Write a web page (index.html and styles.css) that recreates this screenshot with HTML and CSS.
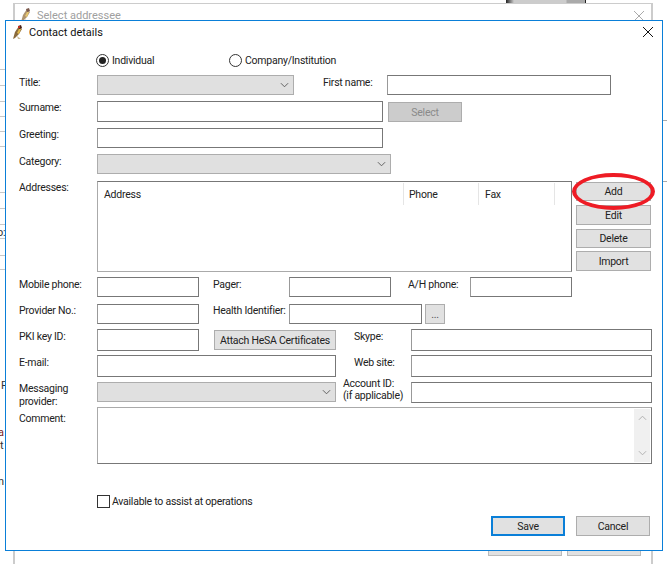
FILE: index.html
```html
<!DOCTYPE html>
<html lang="en">
<head>
    <meta charset="UTF-8">
    <meta name="viewport" content="width=device-width, initial-scale=1.0">
    <title>Contact details</title>
    <link rel="stylesheet" href="styles.css">
</head>
<body>
    <!-- bits of the application showing round the windows -->
    <svg class="behind-left" viewBox="0 0 5 564">
        <path d="M0 69.5H5 M0 85.5H5 M0 101.5H5 M0 116.5H5 M0 131.5H5 M0 146.5H5 M0 192.5H5 M0 208.5H5 M0 224.5H5 M0 238.5H5 M0 255.5H5 M0 269.5H5" stroke="#c8c8c8" fill="none"/>
        <text x="-3" y="236">o:</text>
        <text x="1" y="389">F</text>
        <text x="-2" y="436" fill="#7a1f1f">a</text>
        <text x="0" y="449">t</text>
        <text x="-2" y="485">n</text>
    </svg>
    <svg class="behind-right" viewBox="0 0 4 564">
        <path d="M0 120.5H4 M0 181.5H4" stroke="#aaa" fill="none"/>
    </svg>
    <div class="top-tab"></div>

    <!-- window underneath -->
    <div class="back-window">
        <div class="back-title">
            <svg class="bird faded" viewBox="0 0 11 15">
                <path d="M7 1 L10 4 L7 9 L3 13 L1 14 L3 7 Z" fill="#9c7a4a"/>
                <path d="M6 1 L9 0 L10 3 L7 4 Z" fill="#5a3020"/>
                <path d="M7 4 L9 4 L7 9 L5 8 Z" fill="#e0b84a"/>
                <path d="M5 11 L9 14 L6 14 Z" fill="#cdbb98"/>
            </svg>
            <span>Select addressee</span>
            <svg class="close" viewBox="0 0 10 10"><path d="M0 0 L10 10 M10 0 L0 10" stroke="#aaa" fill="none"/></svg>
        </div>
        <div class="back-buttons">
            <div class="back-btn"></div>
            <div class="back-btn"></div>
        </div>
    </div>

    <div class="dialog">
        <div class="title-bar">
            <svg class="bird" viewBox="0 0 11 15">
                <path d="M7 1 L10 4 L7 9 L3 13 L1 14 L3 7 Z" fill="#8a6a3c"/>
                <path d="M6 1 L9 0 L10 3 L7 4 Z" fill="#4a2015"/>
                <path d="M6 1 L8 1 L8 3 L6 3 Z" fill="#c03020"/>
                <path d="M7 4 L9 4 L7 9 L5 8 Z" fill="#e0b84a"/>
                <path d="M5 11 L9 14 L6 14 Z" fill="#cdbb98"/>
            </svg>
            <span>Contact details</span>
            <svg class="close" viewBox="0 0 10 10"><path d="M0 0 L10 10 M10 0 L0 10" stroke="#111" fill="none"/></svg>
        </div>

        <div class="form">
            <div class="radio-row">
                <label class="radio-item individual"><span class="radio checked"></span>Individual</label>
                <label class="radio-item"><span class="radio"></span>Company/Institution</label>
            </div>

            <div class="row title-row">
                <label class="lbl">Title:</label>
                <div class="combo w197"><svg class="chev" viewBox="0 0 10 6"><path d="M1 1 L5 5 L9 1" /></svg></div>
                <label class="lbl first-lbl">First name:</label>
                <input class="box w224 h20" type="text">
            </div>
            <div class="row surname-row">
                <label class="lbl">Surname:</label>
                <input class="box w286" type="text">
                <button class="btn disabled select-btn">Select</button>
            </div>
            <div class="row greeting-row">
                <label class="lbl">Greeting:</label>
                <input class="box w286 h20" type="text">
            </div>
            <div class="row category-row">
                <label class="lbl">Category:</label>
                <div class="combo w294"><svg class="chev" viewBox="0 0 10 6"><path d="M1 1 L5 5 L9 1" /></svg></div>
            </div>

            <div class="row address-row">
                <label class="lbl">Addresses:</label>
                <div class="list">
                    <div class="list-head">
                        <span class="col-address">Address</span>
                        <span class="col-phone">Phone</span>
                        <span class="col-fax">Fax</span>
                    </div>
                </div>
                <div class="side-buttons">
                    <button class="btn add">Add</button>
                    <button class="btn edit">Edit</button>
                    <button class="btn delete">Delete</button>
                    <button class="btn import">Import</button>
                </div>
            </div>

            <div class="row mobile-row">
                <label class="lbl">Mobile phone:</label>
                <input class="box w102 h20" type="text">
                <label class="lbl mid-lbl">Pager:</label>
                <input class="box w102 h20" type="text">
                <label class="lbl ah-lbl">A/H phone:</label>
                <input class="box w102 h20" type="text">
            </div>
            <div class="row provider-row">
                <label class="lbl">Provider No.:</label>
                <input class="box w102 h20" type="text">
                <label class="lbl mid-lbl">Health Identifier:</label>
                <input class="box w133 h20" type="text">
                <button class="btn dots">...</button>
            </div>
            <div class="row pki-row">
                <label class="lbl">PKI key ID:</label>
                <input class="box w102 h22" type="text">
                <button class="btn attach">Attach HeSA Certificates</button>
                <label class="lbl right-lbl">Skype:</label>
                <input class="box w241 h22" type="text">
            </div>
            <div class="row email-row">
                <label class="lbl">E-mail:</label>
                <input class="box w239 h22" type="text">
                <label class="lbl right-lbl">Web site:</label>
                <input class="box w241 h22" type="text">
            </div>
            <div class="row messaging-row">
                <label class="lbl">Messaging<br>provider:</label>
                <div class="combo w239"><svg class="chev" viewBox="0 0 10 6"><path d="M1 1 L5 5 L9 1" /></svg></div>
                <label class="lbl account-lbl">Account ID:<br>(if applicable)</label>
                <input class="box w241" type="text">
            </div>
            <div class="row comment-row">
                <label class="lbl comment-lbl">Comment:</label>
                <div class="memo">
                    <div class="scrollbar">
                        <svg viewBox="0 0 10 6"><path d="M1 5 L5 1 L9 5" /></svg>
                        <svg viewBox="0 0 10 6"><path d="M1 1 L5 5 L9 1" /></svg>
                    </div>
                </div>
            </div>

            <label class="check-row"><span class="check"></span>Available to assist at operations</label>

            <div class="footer">
                <button class="btn save">Save</button>
                <button class="btn cancel">Cancel</button>
            </div>
        </div>
    </div>

    <!-- red marker drawn over the Add button -->
    <div class="marker"></div>
</body>
</html>
```

FILE: styles.css
```css
html, body {
    margin: 0;
    height: 100%;
}

body {
    position: relative;
    width: 667px;
    height: 564px;
    overflow: hidden;
    background-color: #fff;
    font-family: Roboto, "Liberation Sans", sans-serif;
    font-size: 10.5px;
    letter-spacing: -0.25px;
    color: #222;
}

.behind-left {
    position: absolute;
    left: 0;
    top: 0;
    width: 5px;
    height: 564px;
    font-size: 11px;
    fill: #333;
}

.behind-right {
    position: absolute;
    left: 663px;
    top: 0;
    width: 4px;
    height: 564px;
}

.back-window {
    position: absolute;
    left: 13px;
    top: 3px;
    width: 640px;
    height: 580px;
    box-sizing: border-box;
    border: 1px solid #ccc;
    border-width: 1px 2px;
    background-color: #fff;
}

.back-title {
    display: flex;
    align-items: center;
    height: 23px;
    padding: 0 7px 0 5px;
    color: #a0a0a0;
    font-size: 11px;
    letter-spacing: 0;
}

.back-title .bird {
    margin-right: 6px;
}

.back-title .close {
    margin-left: auto;
}

.back-buttons {
    display: flex;
    gap: 5px;
    margin: 509px 0 0 473px;
}

.back-btn {
    width: 74px;
    height: 20px;
    border: 1px solid #bbb;
    background-color: #e1e1e1;
    box-sizing: border-box;
}

.top-tab {
    position: absolute;
    left: 506px;
    top: 0;
    width: 80px;
    height: 3px;
    background: linear-gradient(to right, #222, #ccc 8px, #ccc 60px, #aaa 61px);
    border-right: 1px solid #222;
    box-sizing: border-box;
}

.dialog {
    position: absolute;
    left: 5px;
    top: 20px;
    width: 658px;
    height: 531px;
    box-sizing: border-box;
    border: 1px solid #0a7fd8;
    background-color: #fff;
}

.title-bar {
    display: flex;
    align-items: center;
    height: 22px;
    padding: 0 9px 0 6px;
    font-size: 11px;
    letter-spacing: 0;
    color: #111;
}

.title-bar .bird {
    margin-right: 6px;
}

.title-bar .close {
    margin-left: auto;
}

.bird {
    width: 11px;
    height: 15px;
}

.bird.faded {
    opacity: 0.8;
}

.close {
    width: 10px;
    height: 10px;
}

.form {
    padding-left: 13px;
}

.radio-row {
    display: flex;
    height: 14px;
    margin-top: 10px;
    padding-left: 77px;
}

.radio-item {
    display: flex;
    align-items: center;
    white-space: nowrap;
}

.individual {
    width: 133px;
}

.radio {
    position: relative;
    width: 13px;
    height: 13px;
    margin-right: 3px;
    border: 1px solid #333;
    border-radius: 50%;
    box-sizing: border-box;
}

.radio.checked::after {
    content: "";
    position: absolute;
    left: 2px;
    top: 2px;
    width: 7px;
    height: 7px;
    border-radius: 50%;
    background-color: #222;
}

.row {
    display: flex;
    align-items: flex-start;
}

.lbl {
    flex: none;
    line-height: 13px;
    white-space: nowrap;
}

.row > .lbl:first-child {
    width: 78px;
}

.title-row .lbl,
.category-row .lbl,
.mobile-row .lbl,
.pki-row .lbl,
.email-row .lbl {
    margin-top: 1px;
}

.box {
    flex: none;
    height: 21px;
    margin: 0;
    padding: 0;
    box-sizing: border-box;
    border: 1px solid #777;
    border-left-color: #999;
    background-color: #fff;
}

.h20 { height: 20px; }
.h22 { height: 22px; }

.w102 { width: 102px; }
.w133 { width: 133px; }
.w197 { width: 197px; }
.w224 { width: 224px; }
.w239 { width: 239px; }
.w241 { width: 241px; }
.w286 { width: 286px; }
.w294 { width: 294px; }

.combo {
    flex: none;
    display: flex;
    align-items: center;
    justify-content: flex-end;
    height: 20px;
    padding-right: 4px;
    box-sizing: border-box;
    border: 1px solid #adadad;
    background-color: #e0e0e0;
}

.chev {
    width: 9px;
    height: 6px;
    fill: none;
    stroke: #555;
}

.btn {
    flex: none;
    width: 75px;
    height: 20px;
    margin: 0;
    padding: 0;
    box-sizing: border-box;
    border: 1px solid #adadad;
    background-color: #e1e1e1;
    color: #222;
    font: inherit;
    letter-spacing: inherit;
    white-space: nowrap;
}

.btn.disabled {
    background-color: #ccc;
    color: #8a8a8a;
}

.title-row {
    margin-top: 8px;
}

.first-lbl {
    margin-left: 29px;
    width: 64px;
}

.surname-row {
    margin-top: 6px;
}

.btn.select-btn {
    width: 74px;
    margin: 1px 0 0 5px;
}

.greeting-row {
    margin-top: 6px;
}

.category-row {
    margin-top: 6px;
}

.address-row {
    margin-top: 7px;
}

.list {
    flex: none;
    width: 475px;
    height: 91px;
    box-sizing: border-box;
    border: 1px solid #777;
    border-left-color: #aaa;
    border-bottom-color: #aaa;
}

.list-head {
    display: flex;
    height: 22px;
    line-height: 24px;
    margin-top: 1px;
}

.list-head span {
    box-sizing: border-box;
    border-right: 1px solid #e5e5e5;
    padding-left: 6px;
}

.list-head .col-phone {
    padding-left: 5px;
}

.col-address { width: 306px; }
.col-phone { width: 75px; }
.col-fax { width: 76px; }

.side-buttons {
    display: flex;
    flex-direction: column;
    margin-left: 4px;
}

.btn.add {
    height: 19px;
    margin-top: 1px;
}

.btn.edit {
    height: 20px;
    margin-top: 4px;
}

.btn.delete {
    height: 19px;
    margin-top: 4px;
}

.btn.import {
    height: 20px;
    margin-top: 3px;
}

.mobile-row {
    margin-top: 5px;
}

.mid-lbl {
    margin-left: 14px;
    width: 76px;
}

.ah-lbl {
    margin-left: 17px;
    width: 62px;
}

.provider-row {
    margin-top: 7px;
}

.btn.dots {
    width: 20px;
    margin-left: 3px;
    color: #555;
}

.pki-row {
    margin-top: 5px;
}

.btn.attach {
    width: 122px;
    margin: 1px 0 0 15px;
}

.right-lbl {
    margin-left: 18px;
    width: 57px;
}

.email-row {
    margin-top: 4px;
}

.messaging-row {
    height: 21px;
    margin-top: 5px;
}

.account-lbl {
    margin: -4px 0 0 7px;
    width: 68px;
    line-height: 12px;
}

.comment-row {
    margin-top: 4px;
}

.comment-lbl {
    margin-top: 5px;
}

.memo {
    flex: none;
    display: flex;
    justify-content: flex-end;
    width: 555px;
    height: 57px;
    padding: 1px;
    box-sizing: border-box;
    border: 1px solid #777;
    border-left-color: #aaa;
    border-top-color: #aaa;
}

.scrollbar {
    display: flex;
    flex-direction: column;
    justify-content: space-between;
    align-items: center;
    width: 16px;
    padding: 6px 0;
    box-sizing: border-box;
    background-color: #f0f0f0;
}

.scrollbar svg {
    width: 9px;
    height: 6px;
    fill: none;
    stroke: #aaa;
}

.check-row {
    display: flex;
    align-items: center;
    height: 13px;
    margin: 31px 0 0 78px;
    white-space: nowrap;
}

.check {
    width: 13px;
    height: 13px;
    margin-right: 2px;
    box-sizing: border-box;
    border: 1px solid #333;
    background-color: #fff;
}

.footer {
    display: flex;
    justify-content: flex-end;
    gap: 11px;
    margin: 8px 12px 0 0;
}

.btn.save,
.btn.cancel {
    width: 74px;
}

.btn.save {
    border: 2px solid #0a7fd8;
}

.marker {
    position: absolute;
    left: 572px;
    top: 173px;
    width: 83px;
    height: 37px;
    box-sizing: border-box;
    border: 4px solid #ee1c25;
    border-radius: 50%;
}
```
